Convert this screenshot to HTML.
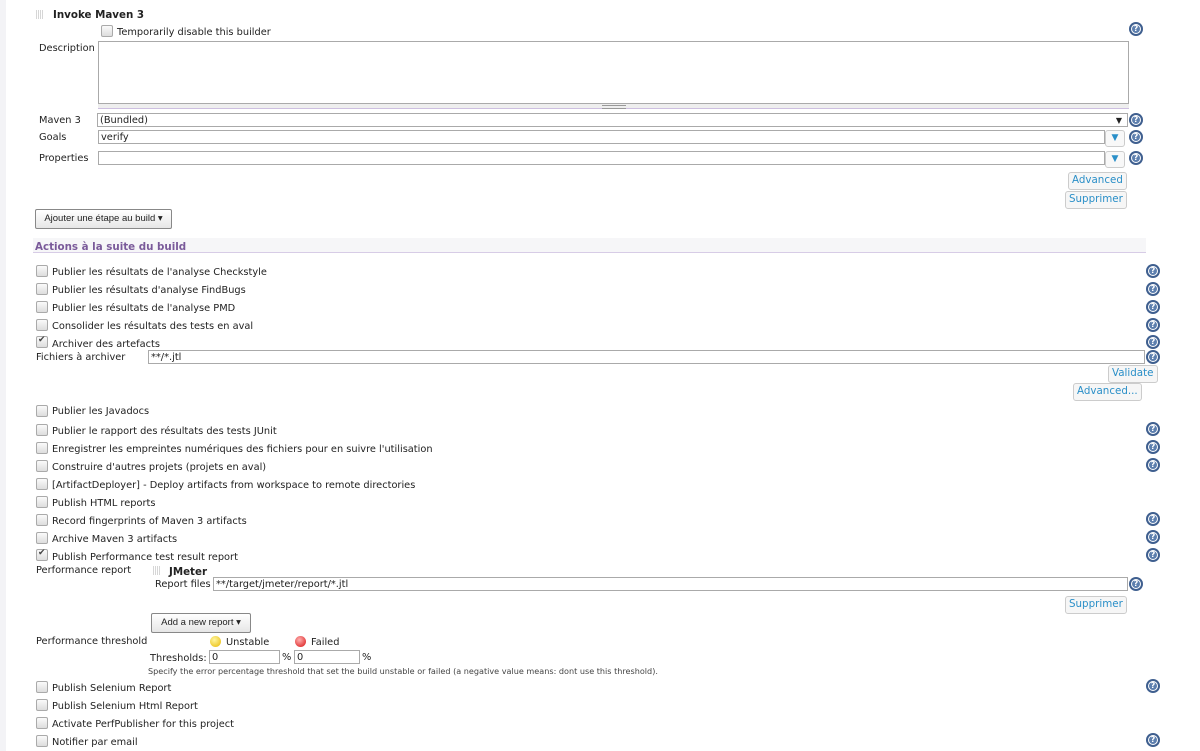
<!DOCTYPE html>
<html><head><meta charset="utf-8"><style>
body{margin:0;width:1200px;height:751px;background:#fff;position:relative;overflow:hidden;font-family:"DejaVu Sans",Verdana,sans-serif;font-size:9.8px;color:#222}
.a{position:absolute;white-space:nowrap}
.t{margin-top:1px}
.strip{position:absolute;left:0;top:0;width:6px;height:751px;background:#f3f3f6}
.cb{position:absolute;width:10px;height:10px;border:1px solid #aaa;border-radius:2px;background:linear-gradient(#fafafa,#ddd)}
.cb.on::after{content:"✔";position:absolute;left:1px;top:-2px;font-size:9px;color:#444}
.inp{position:absolute;height:14px;border:1px solid #aaa;background:#fff;box-sizing:border-box;font-size:9.8px;line-height:13px;padding-left:2px}
.h{position:absolute;width:14px;height:14px;border-radius:50%;background:#3f5f8f;box-sizing:border-box}
.h::before{content:"";position:absolute;left:2px;top:2px;width:10px;height:10px;border-radius:50%;border:1px solid #fff;box-sizing:border-box;background:#5d7fae}
.h::after{content:"?";position:absolute;left:0;top:0;width:14px;text-align:center;color:#fff;font:bold 8px/14px "DejaVu Sans",sans-serif}
.btn{position:absolute;border:1px solid #ccc;border-radius:3px;background:#f6f6f6;color:#2a8fc8;font-size:10.3px;line-height:15px;padding:0 3px;box-sizing:border-box;height:18px}
.dbtn{position:absolute;border:1px solid #888;border-radius:2px;background:linear-gradient(#fff,#e6e6e6);font-family:"Liberation Sans",sans-serif;font-size:9.5px;color:#222;box-sizing:border-box;text-align:center}
.grip{position:absolute;width:8px;height:9px;background:repeating-linear-gradient(90deg,#ccc 0 1px,transparent 1px 2px),#fff;opacity:.8}
.dd{position:absolute;width:20px;height:17px;border:1px solid #ccc;border-radius:3px;background:#f8f8f8;box-sizing:border-box;color:#2a8fc8;font-size:9px;text-align:center;line-height:15px}
</style></head><body>
<div class="strip"></div>
<div class="grip" style="left:36px;top:10px"></div>
<div class="a" style="left:53px;top:9px;font-weight:bold;font-size:10.3px">Invoke Maven 3</div>
<div class="cb" style="left:101px;top:25px"></div>
<div class="a t" style="left:117px;top:26px">Temporarily disable this builder</div>
<div class="h" style="left:1129px;top:22px"></div>
<div class="a t" style="left:39px;top:42px">Description</div>
<div class="inp" style="left:98px;top:41px;width:1031px;height:63px"></div>
<div class="a" style="left:98px;top:104px;width:1031px;height:4px;background:#eee;border-bottom:1px solid #cdbfe0"></div>
<div class="a" style="left:602px;top:105px;width:24px;height:2px;border-top:1px solid #999;border-bottom:1px solid #999"></div>
<div class="a t" style="left:39px;top:114px">Maven 3</div>
<div class="inp" style="left:97px;top:113px;width:1031px">(Bundled)<span style="position:absolute;right:5px;top:0;font-size:8px">▼</span></div>
<div class="h" style="left:1129px;top:113px"></div>
<div class="a t" style="left:39px;top:131px">Goals</div>
<div class="inp" style="left:98px;top:130px;width:1007px">verify</div>
<div class="dd" style="left:1105px;top:130px">▼</div>
<div class="h" style="left:1129px;top:130px"></div>
<div class="a t" style="left:39px;top:152px">Properties</div>
<div class="inp" style="left:98px;top:151px;width:1007px"></div>
<div class="dd" style="left:1105px;top:151px">▼</div>
<div class="h" style="left:1129px;top:151px"></div>
<div class="btn" style="left:1068px;top:172px">Advanced</div>
<div class="btn" style="left:1065px;top:191px">Supprimer</div>
<div class="dbtn" style="left:35px;top:209px;width:137px;height:20px;line-height:18px">Ajouter une étape au build ▾</div>
<div class="a" style="left:33px;top:238px;width:1113px;height:14px;background:#f6f6f8;border-bottom:1px solid #d7cce6"></div>
<div class="a t" style="left:35px;top:240px;font-weight:bold;color:#7a5a9a;font-size:10.3px">Actions à la suite du build</div>

<div class="cb" style="left:36px;top:265px"></div><div class="a t" style="left:52px;top:266px">Publier les résultats de l'analyse Checkstyle</div><div class="h" style="left:1146px;top:264px"></div>
<div class="cb" style="left:36px;top:283px"></div><div class="a t" style="left:52px;top:284px">Publier les résultats d'analyse FindBugs</div><div class="h" style="left:1146px;top:282px"></div>
<div class="cb" style="left:36px;top:301px"></div><div class="a t" style="left:52px;top:302px">Publier les résultats de l'analyse PMD</div><div class="h" style="left:1146px;top:300px"></div>
<div class="cb" style="left:36px;top:319px"></div><div class="a t" style="left:52px;top:320px">Consolider les résultats des tests en aval</div><div class="h" style="left:1146px;top:318px"></div>
<div class="cb on" style="left:36px;top:336px"></div><div class="a t" style="left:52px;top:338px">Archiver des artefacts</div><div class="h" style="left:1146px;top:335px"></div>
<div class="a t" style="left:36px;top:351px">Fichiers à archiver</div>
<div class="inp" style="left:148px;top:350px;width:997px">**/*.jtl</div><div class="h" style="left:1146px;top:350px"></div>
<div class="btn" style="left:1108px;top:365px">Validate</div>
<div class="btn" style="left:1073px;top:383px">Advanced...</div>

<div class="cb" style="left:36px;top:405px"></div><div class="a t" style="left:52px;top:405px">Publier les Javadocs</div>
<div class="cb" style="left:36px;top:424px"></div><div class="a t" style="left:52px;top:425px">Publier le rapport des résultats des tests JUnit</div><div class="h" style="left:1146px;top:422px"></div>
<div class="cb" style="left:36px;top:442px"></div><div class="a t" style="left:52px;top:443px">Enregistrer les empreintes numériques des fichiers pour en suivre l'utilisation</div><div class="h" style="left:1146px;top:440px"></div>
<div class="cb" style="left:36px;top:460px"></div><div class="a t" style="left:52px;top:461px">Construire d'autres projets (projets en aval)</div><div class="h" style="left:1146px;top:458px"></div>
<div class="cb" style="left:36px;top:478px"></div><div class="a t" style="left:52px;top:479px">[ArtifactDeployer] - Deploy artifacts from workspace to remote directories</div>
<div class="cb" style="left:36px;top:496px"></div><div class="a t" style="left:52px;top:497px">Publish HTML reports</div>
<div class="cb" style="left:36px;top:514px"></div><div class="a t" style="left:52px;top:515px">Record fingerprints of Maven 3 artifacts</div><div class="h" style="left:1146px;top:512px"></div>
<div class="cb" style="left:36px;top:532px"></div><div class="a t" style="left:52px;top:533px">Archive Maven 3 artifacts</div><div class="h" style="left:1146px;top:530px"></div>
<div class="cb on" style="left:36px;top:549px"></div><div class="a t" style="left:52px;top:551px">Publish Performance test result report</div><div class="h" style="left:1146px;top:548px"></div>
<div class="a t" style="left:36px;top:564px">Performance report</div>
<div class="grip" style="left:153px;top:566px"></div>
<div class="a t" style="left:169px;top:565px;font-weight:bold;font-size:10.3px">JMeter</div>
<div class="a t" style="left:155px;top:578px">Report files</div>
<div class="inp" style="left:213px;top:577px;width:915px">**/target/jmeter/report/*.jtl</div><div class="h" style="left:1129px;top:577px"></div>
<div class="btn" style="left:1065px;top:596px">Supprimer</div>
<div class="dbtn" style="left:151px;top:613px;width:100px;height:20px;line-height:18px">Add a new report ▾</div>
<div class="a t" style="left:36px;top:635px">Performance threshold</div>
<div class="a" style="left:210px;top:636px;width:11px;height:11px;border-radius:50%;background:radial-gradient(circle at 40% 35%,#fff6a0,#e8b800)"></div>
<div class="a t" style="left:226px;top:636px">Unstable</div>
<div class="a" style="left:295px;top:636px;width:11px;height:11px;border-radius:50%;background:radial-gradient(circle at 40% 35%,#ffb0b0,#d81010)"></div>
<div class="a t" style="left:311px;top:636px">Failed</div>
<div class="a t" style="left:150px;top:652px">Thresholds:</div>
<div class="inp" style="left:209px;top:650px;width:71px">0</div><div class="a t" style="left:282px;top:651px">%</div>
<div class="inp" style="left:294px;top:650px;width:66px">0</div><div class="a t" style="left:362px;top:651px">%</div>
<div class="a" style="left:148px;top:666px;font-size:8.1px;color:#444">Specify the error percentage threshold that set the build unstable or failed (a negative value means: dont use this threshold).</div>
<div class="cb" style="left:36px;top:681px"></div><div class="a t" style="left:52px;top:682px">Publish Selenium Report</div><div class="h" style="left:1146px;top:679px"></div>
<div class="cb" style="left:36px;top:699px"></div><div class="a t" style="left:52px;top:700px">Publish Selenium Html Report</div>
<div class="cb" style="left:36px;top:717px"></div><div class="a t" style="left:52px;top:718px">Activate PerfPublisher for this project</div>
<div class="cb" style="left:36px;top:735px"></div><div class="a t" style="left:52px;top:736px">Notifier par email</div><div class="h" style="left:1146px;top:733px"></div>
</body></html>
